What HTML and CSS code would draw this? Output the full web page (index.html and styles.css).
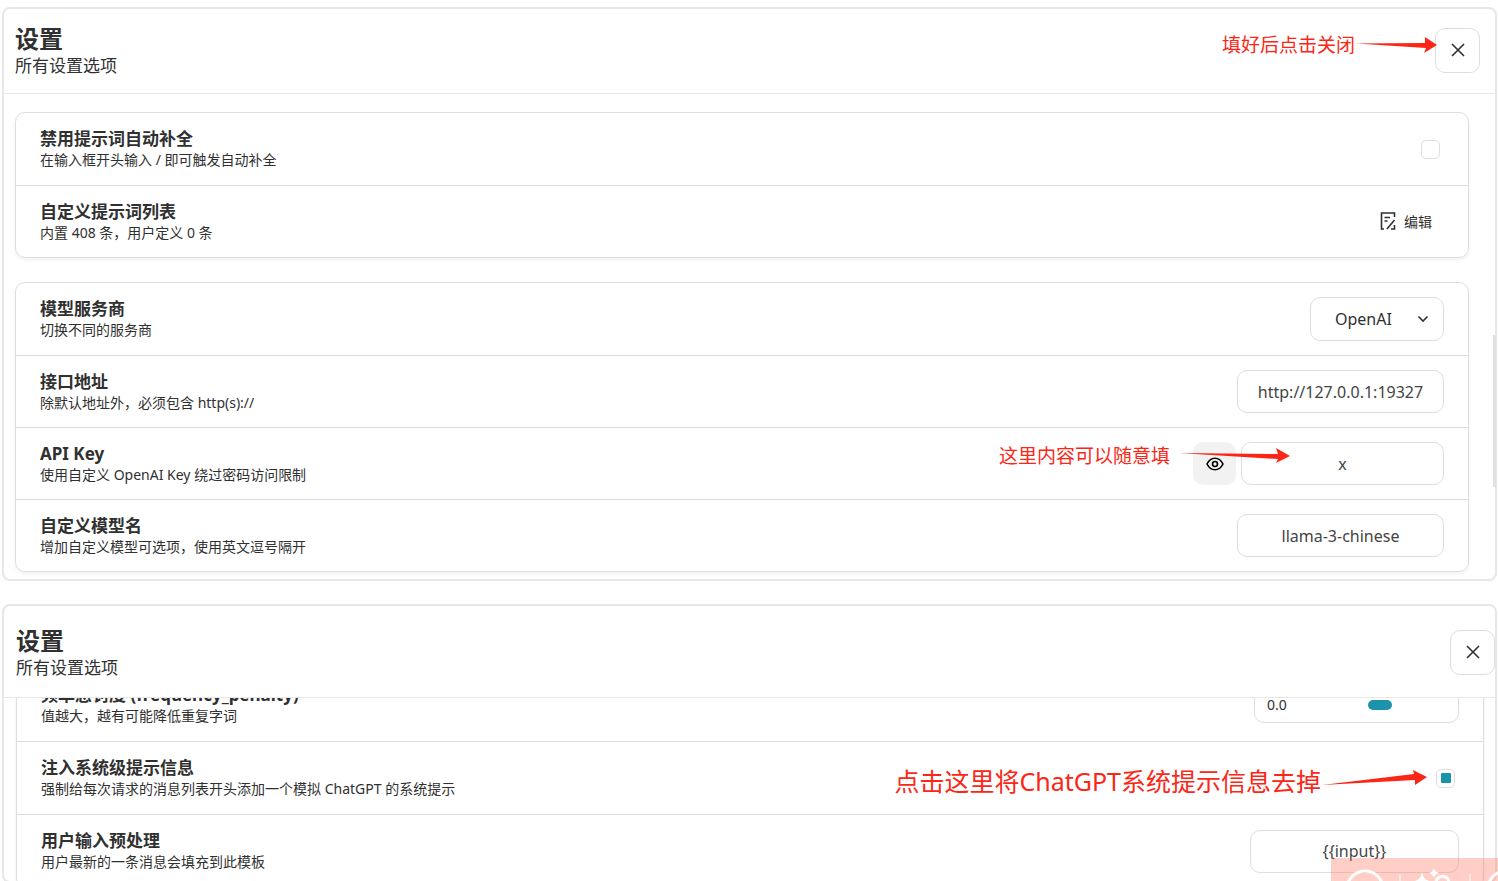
FILE: index.html
```html
<!DOCTYPE html>
<html lang="zh-CN">

<head>
    <meta charset="utf-8" />
    <title>设置</title>
    <link rel="stylesheet" href="styles.css">
</head>

<body>
    <section class="window">
        <header class="window-header">
            <div>
                <h1 class="window-title">设置</h1>
                <p class="window-subtitle">所有设置选项</p>
            </div>
            <button class="close" type="button" aria-label="关闭">
                <svg width="16" height="16" viewBox="0 0 16 16">
                    <path d="M2 2L14 14M14 2L2 14" />
                </svg>
            </button>
            <div class="note note-close">
                <span>填好后点击关闭</span>
                <svg width="82" height="18" viewBox="0 0 82 18">
                    <path d="M1 7.500L70 7V1L82 9L69 17L71 12Z" />
                </svg>
            </div>
        </header>
        <div class="window-body">
            <div class="list">
                <div class="item">
                    <div>
                        <label class="item-title" for="disable-hint">禁用提示词自动补全</label>
                        <p class="item-desc">在输入框开头输入 / 即可触发自动补全</p>
                    </div>
                    <input class="check" id="disable-hint" type="checkbox" />
                </div>
                <div class="item">
                    <div>
                        <h2 class="item-title">自定义提示词列表</h2>
                        <p class="item-desc">内置 408 条，用户定义 0 条</p>
                    </div>
                    <button class="edit" type="button">
                        <svg width="16" height="18" viewBox="0 0 16 18">
                            <path d="M4 17H1.500V1H14.500V5M4.500 5.500H10M4.500 9H7.500M7 17L14.500 8M11 17H14.500V13" />
                        </svg>
                        编辑
                    </button>
                </div>
            </div>
            <div class="list">
                <div class="item">
                    <div>
                        <label class="item-title" for="provider">模型服务商</label>
                        <p class="item-desc">切换不同的服务商</p>
                    </div>
                    <div class="select">
                        <select id="provider">
                            <option>OpenAI</option>
                        </select>
                        <svg width="12" height="8" viewBox="0 0 12 8">
                            <path d="M1.500 1.500L6 6L10.500 1.500" />
                        </svg>
                    </div>
                </div>
                <div class="item">
                    <div>
                        <label class="item-title" for="endpoint">接口地址</label>
                        <p class="item-desc">除默认地址外，必须包含 http(s)://</p>
                    </div>
                    <input class="field" id="endpoint" type="text" value="http://127.0.0.1:19327" />
                </div>
                <div class="item">
                    <div>
                        <label class="item-title" for="api-key">API Key</label>
                        <p class="item-desc">使用自定义 OpenAI Key 绕过密码访问限制</p>
                    </div>
                    <div class="password">
                        <button class="eye" type="button" aria-label="显示">
                            <svg width="18" height="14" viewBox="0 0 18 14">
                                <path d="M1 7C3 3 6 1.200 9 1.200S15 3 17 7C15 11 12 12.800 9 12.800S3 11 1 7Z" />
                                <circle cx="9" cy="7" r="2.500" />
                            </svg>
                        </button>
                        <input class="field" id="api-key" type="text" value="x" />
                    </div>
                    <div class="note note-key">
                        <span>这里内容可以随意填</span>
                        <svg width="112" height="18" viewBox="0 0 112 18">
                            <path d="M1 6L100 7L98 1L112 9L98 16L100 12Z" />
                        </svg>
                    </div>
                </div>
                <div class="item">
                    <div>
                        <label class="item-title" for="custom-model">自定义模型名</label>
                        <p class="item-desc">增加自定义模型可选项，使用英文逗号隔开</p>
                    </div>
                    <input class="field" id="custom-model" type="text" value="llama-3-chinese" />
                </div>
            </div>
        </div>
        <div class="scroll-thumb"></div>
    </section>

    <section class="window scrolled">
        <header class="window-header">
            <div>
                <h1 class="window-title">设置</h1>
                <p class="window-subtitle">所有设置选项</p>
            </div>
            <button class="close" type="button" aria-label="关闭">
                <svg width="16" height="16" viewBox="0 0 16 16">
                    <path d="M2 2L14 14M14 2L2 14" />
                </svg>
            </button>
        </header>
        <div class="window-body">
            <div class="list">
                <div class="item">
                    <div>
                        <label class="item-title" for="frequency">频率惩罚度 (frequency_penalty)</label>
                        <p class="item-desc">值越大，越有可能降低重复字词</p>
                    </div>
                    <div class="range">
                        <output for="frequency">0.0</output>
                        <input id="frequency" type="range" min="-2" max="2" step="0.1" value="0" />
                    </div>
                </div>
                <div class="item">
                    <div>
                        <label class="item-title" for="inject">注入系统级提示信息</label>
                        <p class="item-desc">强制给每次请求的消息列表开头添加一个模拟 ChatGPT 的系统提示</p>
                    </div>
                    <input class="check" id="inject" type="checkbox" checked />
                    <div class="note note-inject">
                        <span>点击这里将ChatGPT系统提示信息去掉</span>
                        <svg width="106" height="20" viewBox="0 0 106 20">
                            <path d="M1 16L93 5L92 1L106 8L94 16L94 11Z" />
                        </svg>
                    </div>
                </div>
                <div class="item">
                    <div>
                        <label class="item-title" for="template">用户输入预处理</label>
                        <p class="item-desc">用户最新的一条消息会填充到此模板</p>
                    </div>
                    <input class="field" id="template" type="text" value="{{input}}" />
                </div>
            </div>
        </div>
    </section>

    <div class="capture-bar">
        <svg width="167" height="23" viewBox="0 0 167 23">
            <circle cx="34" cy="31" r="18" />
            <path d="M69 16V23M139 16V23" class="thin" />
            <path d="M103 10Q104 14 108 15Q104 16 103 20Q102 16 98 15Q102 14 103 10Z" class="solid" />
            <path d="M91 14Q92 21 98 23H84Q90 21 91 14Z" class="solid" />
            <path d="M105 23A7 7 0 0 1 118 23" />
            <circle cx="175" cy="31" r="18" />
        </svg>
    </div>
</body>

</html>
```

FILE: styles.css
```css
* {
    box-sizing: border-box;
    margin: 0;
    padding: 0;
}

body {
    height: 100vh;
    padding: 7px 1px 0 2px;
    display: flex;
    flex-direction: column;
    gap: 23px;
    overflow: hidden;
    background-color: #fff;
    color: #303030;
    font-family: "Noto Sans", "Noto Sans CJK SC", sans-serif;
}

button,
input,
select {
    font-family: inherit;
    color: inherit;
}

svg {
    fill: none;
    stroke: currentColor;
}

.window {
    position: relative;
    border: 2px solid #e7e7e7;
    border-radius: 8px;
}

.window-header {
    position: relative;
    display: flex;
    justify-content: space-between;
    align-items: center;
    padding: 14px 15px 16px 11px;
    border-bottom: 1px solid #e8e8e8;
}

.window-title {
    font-size: 24px;
    line-height: 32px;
}

.window-subtitle {
    font-size: 17px;
    line-height: 22px;
}

.close {
    width: 45px;
    height: 45px;
    display: flex;
    justify-content: center;
    align-items: center;
    background-color: #fff;
    border: 1px solid #dedede;
    border-radius: 10px;
}

.close svg {
    stroke-width: 1.6;
}

.window-body {
    padding: 18px 26px 7px 11px;
}

.list {
    border: 1px solid #dedede;
    border-radius: 10px;
    box-shadow: 0 2px 4px rgba(0, 0, 0, 0.06);
}

.list + .list {
    margin-top: 24px;
}

.item {
    position: relative;
    display: flex;
    justify-content: space-between;
    align-items: center;
    height: 72px;
    padding: 0 24px;
}

.item + .item {
    border-top: 1px solid #dedede;
}

.item-title {
    display: block;
    font-size: 17px;
    font-weight: bold;
    line-height: 21px;
}

.item-desc {
    font-size: 14px;
    line-height: 21px;
}

.check {
    appearance: none;
    width: 19px;
    height: 19px;
    margin-right: 4px;
    display: grid;
    place-items: center;
    border: 1px solid #dedede;
    border-radius: 5px;
}

.check:checked::before {
    content: "";
    width: 10px;
    height: 10px;
    border-radius: 1px;
    background-color: #1d93ab;
}

.edit {
    display: flex;
    align-items: center;
    gap: 8px;
    padding: 8px 12px 10px;
    border: none;
    background: none;
    font-size: 14px;
}

.edit svg {
    stroke-width: 1.6;
}

.field {
    width: 207px;
    height: 43px;
    padding: 0 10px;
    border: 1px solid #dedede;
    border-radius: 10px;
    background-color: #fff;
    color: #444;
    font-size: 16px;
    text-align: center;
}

.select {
    position: relative;
}

.select select {
    appearance: none;
    height: 44px;
    width: 134px;
    padding: 0 24px;
    border: 1px solid #dedede;
    border-radius: 10px;
    background-color: #fff;
    font-size: 16px;
}

.select svg {
    position: absolute;
    top: 18px;
    right: 15px;
    stroke-width: 1.6;
    pointer-events: none;
}

.password {
    display: flex;
    gap: 5px;
}

.password .field {
    width: 203px;
}

.eye {
    width: 43px;
    height: 43px;
    display: flex;
    justify-content: center;
    align-items: center;
    border: none;
    border-radius: 10px;
    background-color: #f2f2f2;
    color: #000;
}

.eye svg {
    stroke-width: 1.6;
}

.range {
    width: 205px;
    height: 37px;
    display: flex;
    align-items: center;
    padding: 0 12px;
    border: 1px solid #dedede;
    border-radius: 10px;
    font-size: 14px;
}

.range input {
    appearance: none;
    flex: 1;
    min-width: 0;
    margin-left: 28px;
    background: none;
}

.range input::-webkit-slider-thumb {
    appearance: none;
    width: 24px;
    height: 10px;
    border-radius: 5px;
    background-color: #1d93ab;
}

.scroll-thumb {
    position: absolute;
    top: 326px;
    right: -1px;
    width: 3px;
    height: 152px;
    background-color: #e0e0e0;
}

/* second window, list scrolled part of the way down */
.scrolled {
    flex: 1;
    min-height: 0;
    margin-bottom: -2px;
    display: flex;
    flex-direction: column;
}

.scrolled .window-header {
    padding: 19px 0 18px 12px;
}

.scrolled .window-body {
    flex: 1;
    min-height: 0;
    overflow: hidden;
    padding: 0 11px 0 12px;
}

.scrolled .list {
    margin-top: -31px;
}

.scrolled .item {
    height: 73px;
}

.scrolled .field {
    width: 209px;
}

/* red notes */
.note {
    position: absolute;
    display: flex;
    align-items: center;
    color: #fb2616;
    font-size: 19px;
    line-height: 28px;
    white-space: nowrap;
    pointer-events: none;
}

.note svg {
    fill: currentColor;
    stroke: none;
}

.note-close {
    top: 22px;
    right: 58px;
}

.note-key {
    top: 14px;
    right: 178px;
    gap: 8px;
}

.note-inject {
    top: 21px;
    right: 56px;
    font-size: 25px;
    line-height: 36px;
}

.note-inject svg {
    margin-bottom: 4px;
}

.capture-bar {
    position: fixed;
    right: 0;
    bottom: 0;
    height: 23px;
    background-color: rgba(255, 120, 100, 0.36);
    color: #fff;
}

.capture-bar svg {
    display: block;
    stroke-width: 3;
}

.capture-bar .thin {
    stroke-width: 1;
}

.capture-bar .solid {
    fill: currentColor;
    stroke: none;
}
```
